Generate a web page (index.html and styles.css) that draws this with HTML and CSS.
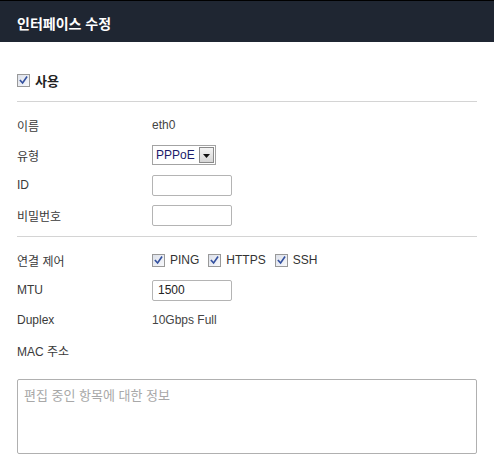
FILE: index.html
```html
<!DOCTYPE html>
<html lang="ko">
<head>
<meta charset="utf-8">
<title>인터페이스 수정</title>
<link rel="stylesheet" href="styles.css">
</head>
<body>
<div class="header"><span class="title">인터페이스 수정</span></div>
<div class="content">
  <div class="use-row">
    <span class="cb"><svg width="11" height="11" viewBox="0 0 11 11"><path d="M2.4 5.6 L4.6 8 L8.6 2.2" fill="none" stroke="#33509f" stroke-width="1.6" stroke-linecap="square"/></svg></span>
    <span class="use-label">사용</span>
  </div>
  <div class="divider"></div>
  <div class="group">
    <div class="row"><span class="label">이름</span><span class="value">eth0</span></div>
    <div class="row"><span class="label">유형</span>
      <span class="select"><span class="select-text">PPPoE</span><span class="select-btn"><svg width="7" height="4" viewBox="0 0 7 4"><path d="M0 0 H7 L3.5 4 Z" fill="#111"/></svg></span></span>
    </div>
    <div class="row"><span class="label">ID</span><span class="input"></span></div>
    <div class="row"><span class="label">비밀번호</span><span class="input"></span></div>
  </div>
  <div class="divider"></div>
  <div class="group">
    <div class="row"><span class="label">연결 제어</span>
      <span class="checks">
        <span class="check"><span class="cb"><svg width="11" height="11" viewBox="0 0 11 11"><path d="M2.4 5.6 L4.6 8 L8.6 2.2" fill="none" stroke="#33509f" stroke-width="1.6" stroke-linecap="square"/></svg></span><span class="check-text">PING</span></span>
        <span class="check"><span class="cb"><svg width="11" height="11" viewBox="0 0 11 11"><path d="M2.4 5.6 L4.6 8 L8.6 2.2" fill="none" stroke="#33509f" stroke-width="1.6" stroke-linecap="square"/></svg></span><span class="check-text">HTTPS</span></span>
        <span class="check"><span class="cb"><svg width="11" height="11" viewBox="0 0 11 11"><path d="M2.4 5.6 L4.6 8 L8.6 2.2" fill="none" stroke="#33509f" stroke-width="1.6" stroke-linecap="square"/></svg></span><span class="check-text">SSH</span></span>
      </span>
    </div>
    <div class="row"><span class="label">MTU</span><span class="input"><span class="input-text">1500</span></span></div>
    <div class="row"><span class="label">Duplex</span><span class="value">10Gbps Full</span></div>
    <div class="row"><span class="label">MAC 주소</span><span class="value"></span></div>
  </div>
  <div class="info">편집 중인 항목에 대한 정보</div>
</div>
</body>
</html>
```
FILE: styles.css
```css
html, body {
  margin: 0;
  padding: 0;
  background: #ffffff;
}
body {
  font-family: "Liberation Sans", "Noto Sans CJK KR", sans-serif;
  font-size: 12px;
  color: #333333;
}
.header {
  height: 41px;
  border-top: 1px solid #000000;
  background: #1f2632;
  display: flex;
  align-items: center;
  padding-left: 17px;
}
.title {
  color: #ffffff;
  font-weight: bold;
  font-size: 14px;
  position: relative;
  top: 1px;
}
.content {
  padding: 0 17px;
}
.use-row {
  margin-top: 23px;
  height: 30px;
  display: flex;
  align-items: center;
  gap: 5px;
}
.use-label {
  font-weight: bold;
  font-size: 13px;
  color: #222222;
}
.cb {
  width: 11px;
  height: 11px;
  border: 1px solid #999999;
  background: linear-gradient(135deg, #dde1ea 0%, #f7f8fb 100%);
  display: inline-flex;
  flex: none;
}
.cb svg {
  display: block;
}
.divider {
  margin-top: 6px;
  height: 1px;
  background: #d4d4d4;
}
.group {
  margin-top: 8px;
}
.row {
  height: 30px;
  display: flex;
  align-items: center;
}
.label {
  width: 135px;
  flex: none;
  color: #3a3a3a;
}
.value {
  color: #444444;
}
.input {
  width: 73px;
  height: 19px;
  border: 1px solid #b4b4b4;
  border-radius: 2px;
  display: flex;
  align-items: center;
  padding-left: 5px;
}
.input-text {
  color: #222222;
}
.select {
  height: 18px;
  border: 1px solid #a3a3a3;
  display: flex;
  align-items: center;
  padding: 0 1px 0 3px;
}
.select-text {
  color: #1b1b6b;
  font-size: 12px;
  margin-right: 4px;
}
.select-btn {
  width: 13px;
  height: 14px;
  border: 1px solid #8a8a8a;
  background: linear-gradient(#f4f4f4, #d6d6d6);
  display: flex;
  align-items: center;
  justify-content: center;
}
.select-btn svg {
  display: block;
  margin-top: 2px;
}
.checks {
  display: flex;
  align-items: center;
  gap: 9px;
}
.check {
  display: flex;
  align-items: center;
  gap: 5px;
}
.check-text {
  color: #333333;
}
.info {
  margin-top: 14px;
  height: 65px;
  border: 1px solid #b0b0b0;
  border-radius: 2px;
  padding: 6px 6px 2px;
  color: #a8a8a8;
  font-size: 13px;
  line-height: 20px;
}
```
